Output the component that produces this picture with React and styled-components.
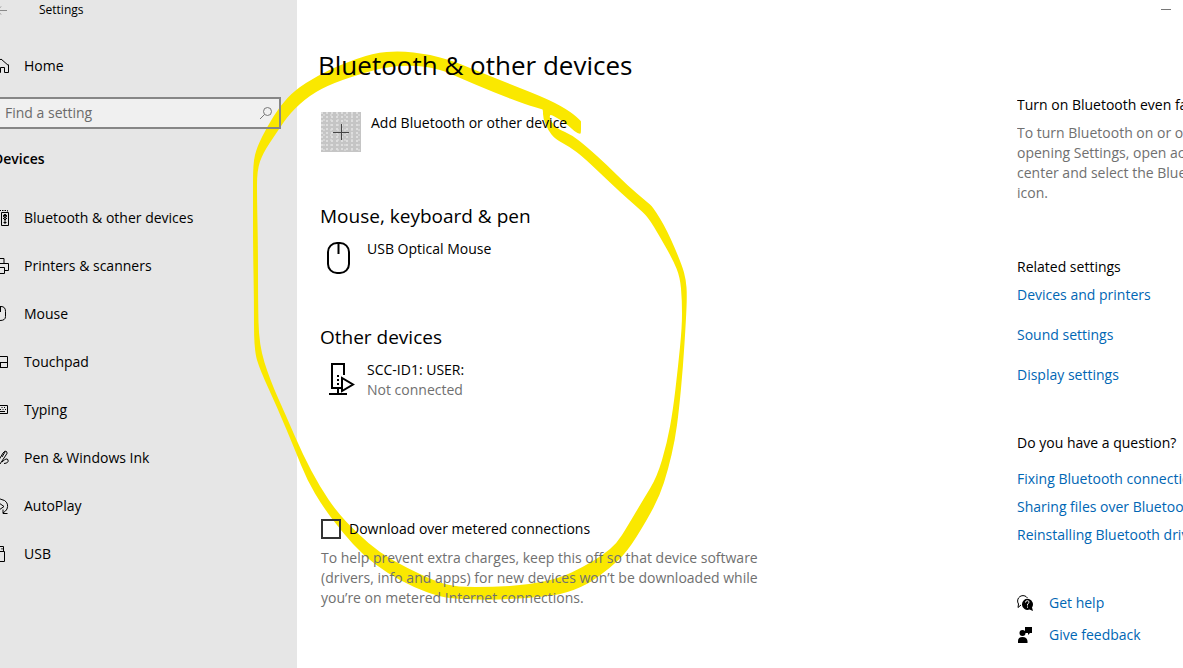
import React from "react";
import styled, { createGlobalStyle } from "styled-components";

const GlobalStyle = createGlobalStyle`
  *, *::before, *::after { box-sizing: border-box; }
  body {
    margin: 0;
    background: #fff;
    color: #000;
    font-family: "Segoe UI", "Open Sans", "Noto Sans", sans-serif;
    font-size: 14px;
    line-height: 20px;
    overflow: hidden;
  }
  h1, h2, h3, p, ul { margin: 0; padding: 0; font-size: inherit; font-weight: 400; }
  ul { list-style: none; }
  button { font: inherit; color: inherit; border: 0; background: none; padding: 0; }
`;

const Window = styled.div`
  position: relative;
  isolation: isolate;
  display: flex;
  min-height: 100vh;
  overflow: hidden;
`;

/* Text and controls sit above the highlighter stroke, backgrounds below it. */
const Layer = styled.div`
  position: relative;
  z-index: 2;
`;

const Sidebar = styled.aside`
  flex: 0 0 297px;
  background: #e6e6e6;
  overflow: hidden;
`;

const AppTitle = styled(Layer)`
  display: flex;
  align-items: center;
  gap: 31px;
  height: 20px;
  margin-left: -8px;
  font-size: 12px;
`;

const BackButton = styled.button`
  display: flex;
  color: #8a8a8a;
`;

const NavLink = styled.a`
  display: flex;
  align-items: center;
  gap: 15px;
  height: 48px;
  margin-left: -9px;
  color: #000;
  text-decoration: none;
`;

const HomeLink = styled(NavLink)`
  margin-top: 22px;
`;

const SearchBox = styled.label`
  display: block;
  width: 281px;
  height: 32px;
  margin-top: 7px;
  background: #f0f0f0;
`;

const SearchFrame = styled(Layer)`
  display: flex;
  align-items: center;
  height: 100%;
  padding-right: 6px;
  border: 2px solid #868686;
  border-left: 0;
  color: #777;
`;

const SearchInput = styled.input`
  flex: 1;
  min-width: 0;
  padding: 0 0 0 5px;
  border: 0;
  outline: 0;
  background: transparent;
  font: inherit;
  color: #000;
  &::placeholder { color: #6b6b6b; opacity: 1; }
`;

const Category = styled.h2`
  margin: 20px 0 25px -7px;
  font-weight: 600;
`;

const Body = styled.div`
  flex: 1;
  min-width: 0;
`;

const WindowBar = styled.header`
  display: flex;
  justify-content: flex-end;
  height: 20px;
  padding-right: 12px;
`;

const Columns = styled.div`
  display: flex;
  justify-content: space-between;
`;

const Main = styled.main`
  position: relative;
  z-index: 2;
  flex: 0 1 480px;
  padding: 28px 0 0 24px;
`;

const Title = styled.h1`
  margin-left: -3px;
  font-size: 26px;
  line-height: 34px;
  white-space: nowrap;
`;

const AddButton = styled.button`
  display: flex;
  gap: 10px;
  margin-top: 30px;
  line-height: 22px;
  text-align: left;
`;

const AddTile = styled.span`
  display: flex;
  align-items: center;
  justify-content: center;
  width: 40px;
  height: 40px;
  background:
    radial-gradient(circle at 1px 1px, #dedede 1px, transparent 1px) 0 0 / 5px 4px,
    radial-gradient(circle at 3px 3px, #d4d4d4 1px, transparent 1px) 0 0 / 7px 5px,
    #c5c5c5;
`;

const Section = styled.section`
  margin-top: ${(p) => p.$gap}px;
`;

const SectionTitle = styled.h2`
  margin: 0 0 9px -1px;
  font-size: 19px;
  line-height: 28px;
`;

const Device = styled.div`
  display: flex;
  gap: 6px;
  height: 40px;
`;

const DeviceIcon = styled.span`
  flex: 0 0 40px;
`;

const Muted = styled.p`
  color: #707070;
`;

const HelpText = styled(Muted)`
  margin-top: 8px;
`;

const CheckRow = styled.label`
  display: flex;
  align-items: center;
  gap: 8px;
  margin: 119px 0 9px;
`;

const Checkbox = styled.input`
  appearance: none;
  width: 20px;
  height: 20px;
  margin: 0;
  border: 2px solid #333;
`;

const Help = styled.aside`
  position: relative;
  z-index: 2;
  flex: 0 0 166px;
  padding-top: 75px;
  overflow: hidden;
  & > * { width: 236px; }
`;

const Group = styled.section`
  margin-bottom: ${(p) => p.$after}px;
`;

const LinkList = styled.ul`
  display: grid;
  gap: ${(p) => p.$gap}px;
  margin-top: ${(p) => p.$top || 0}px;
`;

const TextLink = styled.a`
  display: flex;
  align-items: center;
  gap: 16px;
  color: #0066b4;
  text-decoration: none;
  white-space: nowrap;
  svg { color: #000; }
`;

const Stroke = styled.svg`
  position: absolute;
  z-index: 1;
  top: 0;
  left: 0;
  pointer-events: none;
`;

const Icon = ({ size = 18, box = 18, width = 1, children }) => (
  <svg width={size} height={size} viewBox={`0 0 ${box} ${box}`} fill="none" stroke="currentColor" strokeWidth={width} aria-hidden="true">
    {children}
  </svg>
);

const icons = {
  home: <path d="M1.500 9.500 10 2l8 7M3.500 8v7.500h6V10.500h4v5h4v-8" />,
  bluetooth: (
    <>
      <path d="M1 1.500h15.500v2" strokeDasharray="1.500 1" />
      <path d="M10.500 3.500h7v13h-7z" />
      <path d="M14 5v10M12.500 6.500h3M12 9l2 2 2-2M12.500 13.500h3" />
      <circle cx="14" cy="7" r="1.500" />
    </>
  ),
  printer: <path d="M4.500 6.500v-5h8.500v5M4.500 13.500h-3v-7h16v7h-4M4.500 10.500h9v6h-9z" />,
  mouse: <path d="M3.500 7q0-5.500 5.500-5.500h1q4.500 0 4.500 5v5q0 4-5.500 4T3.500 11.500zM9.500 2v5" />,
  touchpad: <path d="M1.500 3.500h15v11h-15zM1.500 9.500h15M9.500 9.500v5" />,
  typing: (
    <>
      <path d="M.5 4.500h16v8H.5z" />
      <path d="M3 6.500h12M4 8.500h11" strokeDasharray="1 1.500" />
      <path d="M5 10.500h9" />
    </>
  ),
  pen: <path d="M5 16 12 4q2-3 3.500-1.500T15 6L9 15l-3 1zM11 8l3-5M11 13q5-5 6-2t-4 3.500" />,
  autoplay: <path d="M5 3.500Q9 .5 13.500 3.500T16 12q-1 2-4 4M12 12.500v4h4.500M8 6l5 3.500L8 13z" />,
  usb: <path d="M4.500 6.500h9v10h-9zM6.500 6.500v-5h6v5M11 3v1.500" />,
};

const nav = [
  ["bluetooth", "Bluetooth & other devices"],
  ["printer", "Printers & scanners"],
  ["mouse", "Mouse"],
  ["touchpad", "Touchpad"],
  ["typing", "Typing"],
  ["pen", "Pen & Windows Ink"],
  ["autoplay", "AutoPlay"],
  ["usb", "USB"],
];

const outer = [
  [581, 122], [581, 121], [571, 112], [550, 100], [510, 84], [470, 68], [453, 61], [427, 54], [400, 51], [373, 53], [340, 65], [317, 76],
  [295, 90], [280, 106], [267, 127], [257, 147], [253, 163], [253, 200], [253, 247], [254, 300], [254, 350], [260, 370], [277, 407],
  [295, 450], [307, 480], [323, 507], [343, 533], [363, 555], [387, 573], [413, 587], [440, 597], [460, 599], [493, 600],
  [527, 598], [560, 595], [587, 585], [610, 568], [627, 552], [647, 520], [660, 495], [668, 470], [675, 440], [679, 410],
  [683, 367], [686, 320], [687, 295], [686, 280], [682, 265], [667, 230], [653, 207], [647, 202], [627, 185], [607, 165], [587, 147],
  [572, 135], [558, 129], [551, 122], [549, 114], [556, 117], [568, 125], [575, 132], [580, 134], [581, 133],
];
const inner = [
  [543, 110], [542, 109], [527, 105], [493, 92], [460, 78], [440, 69], [413, 65], [387, 67], [367, 72], [333, 83], [310, 95], [290, 113],
  [277, 132], [263, 153], [257, 170], [257, 200], [258, 247], [258, 300], [259, 345], [270, 380], [287, 418], [303, 455], [320, 487],
  [337, 512], [357, 533], [380, 553], [407, 568], [437, 582], [457, 587], [493, 587], [527, 585], [560, 578], [583, 567], [603, 555],
  [617, 543], [627, 527], [643, 500], [657, 477], [667, 443], [673, 410], [678, 367], [682, 327], [682, 300], [680, 277], [673, 260],
  [660, 237], [648, 217], [637, 207], [620, 192], [600, 173], [583, 157], [570, 147], [555, 139], [548, 130], [543, 118],
];

/* Rounds a closed polygon by curving through the midpoint of each side. */
const smooth = (pts) => {
  const mid = (a, b) => `${(a[0] + b[0]) / 2} ${(a[1] + b[1]) / 2}`;
  const last = pts[pts.length - 1];
  return `M${mid(last, pts[0])}` + pts.map((p, i) => `Q${p[0]} ${p[1]} ${mid(p, pts[(i + 1) % pts.length])}`).join("") + "Z";
};

export default function App() {
  return (
    <Window>
      <GlobalStyle />
      <Sidebar>
        <AppTitle>
          <BackButton aria-label="Back">
            <Icon size={16} box={16}><path d="M1 8.500h14M9 4.500 5 8.500l4 4" /></Icon>
          </BackButton>
          Settings
        </AppTitle>
        <Layer>
          <HomeLink href="#home"><Icon>{icons.home}</Icon>Home</HomeLink>
        </Layer>
        <SearchBox>
          <SearchFrame>
            <SearchInput type="text" placeholder="Find a setting" aria-label="Find a setting" />
            <Icon size={14} box={14}><circle cx="8.500" cy="5.500" r="4" /><path d="M5.500 8.500 1 13" /></Icon>
          </SearchFrame>
        </SearchBox>
        <Layer as="nav">
          <Category>Devices</Category>
          {nav.map(([icon, label]) => (
            <NavLink href={`#${icon}`} key={icon}><Icon>{icons[icon]}</Icon>{label}</NavLink>
          ))}
        </Layer>
      </Sidebar>

      <Body>
        <WindowBar>
          <button aria-label="Minimize">
            <svg width="10" height="20" stroke="#777" aria-hidden="true"><path d="M0 9.500h10" /></svg>
          </button>
        </WindowBar>
        <Columns>
          <Main>
            <Title>Bluetooth &amp; other devices</Title>
            <AddButton>
              <AddTile><Icon size={16} box={16}><path d="M8.500 0v16M0 8.500h16" stroke="#444" /></Icon></AddTile>
              Add Bluetooth or other device
            </AddButton>
            <Section $gap={50}>
              <SectionTitle>Mouse, keyboard &amp; pen</SectionTitle>
              <Device>
                <DeviceIcon>
                  <Icon size={40} box={40} width={2}><rect x="7" y="4" width="21" height="30" rx="9" /><path d="M17.500 4v11" /></Icon>
                </DeviceIcon>
                <p>USB Optical Mouse</p>
              </Device>
            </Section>
            <Section $gap={44}>
              <SectionTitle>Other devices</SectionTitle>
              <Device>
                <DeviceIcon>
                  <Icon size={40} box={40} width={2}>
                    <path d="M23 15V4H11v24h6v6M8 34h18M21 18v13l11-6.500z" />
                    <path d="M17 15v10" strokeDasharray="2 2" />
                    <path d="M17 28h3" />
                  </Icon>
                </DeviceIcon>
                <div><p>SCC-ID1: USER:</p><Muted>Not connected</Muted></div>
              </Device>
            </Section>
            <CheckRow><Checkbox type="checkbox" />Download over metered connections</CheckRow>
            <Muted>
              To help prevent extra charges, keep this off so that device software (drivers, info and apps) for new devices
              won’t be downloaded while you’re on metered Internet connections.
            </Muted>
          </Main>
          <Help>
            <Group $after={54}>
              <h3>Turn on Bluetooth even faster</h3>
              <HelpText>
                To turn Bluetooth on or off without opening Settings, open action center and select the Bluetooth icon.
              </HelpText>
            </Group>
            <Group $after={48}>
              <h3>Related settings</h3>
              <LinkList $gap={20} $top={8}>
                {["Devices and printers", "Sound settings", "Display settings"].map((t) => (
                  <li key={t}><TextLink href="#related">{t}</TextLink></li>
                ))}
              </LinkList>
            </Group>
            <Group $after={48}>
              <h3>Do you have a question?</h3>
              <LinkList $gap={8} $top={16}>
                {["Fixing Bluetooth connections", "Sharing files over Bluetooth", "Reinstalling Bluetooth drivers"].map((t) => (
                  <li key={t}><TextLink href="#question">{t}</TextLink></li>
                ))}
              </LinkList>
            </Group>
            <LinkList $gap={12}>
              <li>
                <TextLink href="#help">
                  <Icon size={16} box={16}>
                    <path d="M4 10 1 12.500 1.500 9A5 5 0 1 1 10.500 3" />
                    <path d="M15 12.500 16 16l-3.500-1.500a5.500 5.500 0 1 1 2.500-2z" fill="currentColor" stroke="none" />
                    <path d="M8.500 7.500q0-2 2-1.800t1.500 2L10.500 9v1.500M10.500 11.500v1.200" stroke="#fff" />
                  </Icon>
                  Get help
                </TextLink>
              </li>
              <li>
                <TextLink href="#feedback">
                  <Icon size={16} box={16}>
                    <g fill="currentColor" stroke="none">
                      <circle cx="5.500" cy="6" r="3" />
                      <path d="M1 16v-2q0-4 4.500-4t5 4v2zM8 0h7v6h-2l-2 2V6H8z" />
                    </g>
                  </Icon>
                  Give feedback
                </TextLink>
              </li>
            </LinkList>
          </Help>
        </Columns>
      </Body>

      <Stroke width="700" height="620" viewBox="0 0 700 620" aria-hidden="true">
        <path d={smooth(outer) + smooth(inner)} fillRule="evenodd" fill="#fae800" />
      </Stroke>
    </Window>
  );
}
